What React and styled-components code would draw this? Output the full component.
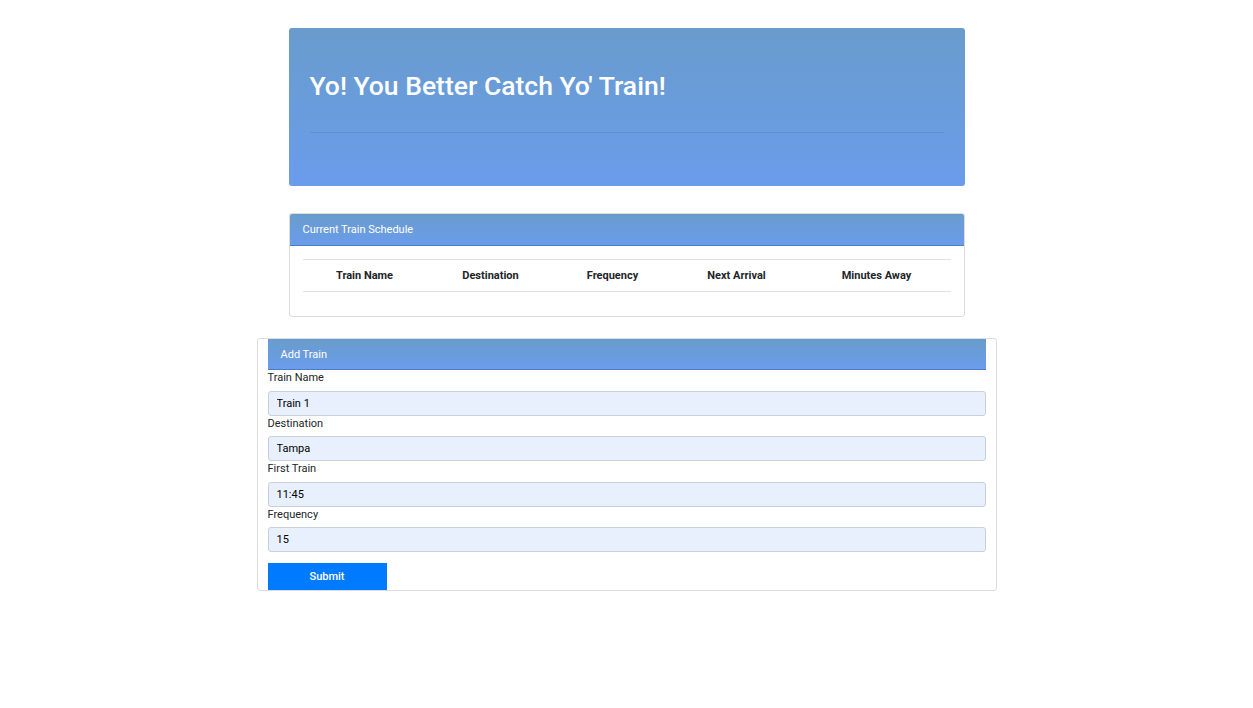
import React from "react";
import styled, { createGlobalStyle } from "styled-components";

const GlobalStyle = createGlobalStyle`
  body {
    margin: 0;
    background: #fff;
    font-family: Roboto, "Liberation Sans", sans-serif;
    color: #212529;
  }
  * { box-sizing: border-box; }
`;

const blueGradient = "linear-gradient(to bottom, #699ccc, #6a9cec)";

const Page = styled.div`
  display: flex;
  flex-direction: column;
  align-items: center;
  padding-top: 28px;
`;

const Jumbotron = styled.div`
  width: 676px;
  height: 158px;
  background: ${blueGradient};
  border-radius: 3px;
  padding: 0 21px;
  color: #fff;
  display: flex;
  flex-direction: column;
`;

const Title = styled.h1`
  margin: 0;
  padding-top: 41px;
  font-size: 26.5px;
  font-weight: 500;
  line-height: 34px;
`;

const Rule = styled.hr`
  margin: 29px 0 0;
  border: 0;
  border-top: 1px solid rgba(80, 130, 200, 0.45);
`;

const Card = styled.div`
  width: ${(p) => p.$width}px;
  margin-top: ${(p) => p.$top}px;
  border: 1px solid #dcdcdc;
  border-radius: 3px;
  padding: ${(p) => p.$pad};
  background: #fff;
`;

const CardHeader = styled.div`
  height: ${(p) => p.$height}px;
  background: ${blueGradient};
  border-bottom: 1px solid #4d7fc4;
  color: #fff;
  font-size: 11px;
  display: flex;
  align-items: center;
  padding-left: 13px;
  border-radius: ${(p) => (p.$round ? "2px 2px 0 0" : "0")};
`;

const CardBody = styled.div`
  padding: 13px 13px 24px;
`;

const Table = styled.table`
  width: 100%;
  border-collapse: collapse;
`;

const Th = styled.th`
  width: ${(p) => p.$w}px;
  height: 32px;
  padding: 0;
  font-size: 11px;
  font-weight: 700;
  text-align: center;
  color: #212529;
  border-top: 1px solid #dee2e6;
  border-bottom: 1px solid #dee2e6;
`;

const Label = styled.label`
  display: block;
  font-size: 11px;
  line-height: 16px;
  margin-bottom: 4.6px;
  color: #212529;
`;

const Input = styled.input`
  display: block;
  width: 100%;
  height: 25px;
  padding: 0 8px;
  border: 1px solid #c9d0d8;
  border-radius: 3px;
  background: #e8f0fe;
  font-family: inherit;
  font-size: 11px;
  color: #000;
  outline: none;
`;

const Submit = styled.button`
  margin-top: 11px;
  width: 119px;
  height: 27px;
  border: 0;
  background: #007bff;
  color: #fff;
  font-family: inherit;
  font-size: 11px;
  font-weight: 500;
  display: block;
`;

const columns = [
  ["Train Name", 124],
  ["Destination", 128],
  ["Frequency", 116],
  ["Next Arrival", 132],
  ["Minutes Away", 148],
];

const fields = [
  ["Train Name", "Train 1"],
  ["Destination", "Tampa"],
  ["First Train", "11:45"],
  ["Frequency", "15"],
];

export default function App() {
  return (
    <>
      <GlobalStyle />
      <Page>
        <Jumbotron>
          <Title>Yo! You Better Catch Yo' Train!</Title>
          <Rule />
        </Jumbotron>

        <Card $width={676} $top={27} $pad="0">
          <CardHeader $height={32} $round>
            Current Train Schedule
          </CardHeader>
          <CardBody>
            <Table>
              <thead>
                <tr>
                  {columns.map(([name, w]) => (
                    <Th key={name} $w={w}>
                      {name}
                    </Th>
                  ))}
                </tr>
              </thead>
            </Table>
          </CardBody>
        </Card>

        <Card $width={740} $top={21} $pad="0 10px">
          <CardHeader $height={31}>Add Train</CardHeader>
          {fields.map(([label, value]) => (
            <div key={label}>
              <Label>{label}</Label>
              <Input defaultValue={value} />
            </div>
          ))}
          <Submit>Submit</Submit>
        </Card>
      </Page>
    </>
  );
}
